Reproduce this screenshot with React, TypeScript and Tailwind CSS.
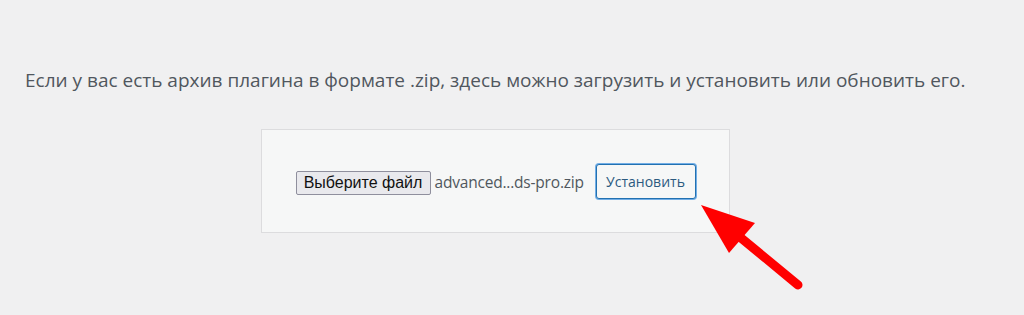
export default function App() {
  return (
    <div className="relative h-[315px] w-[1024px] overflow-hidden bg-[#f0f0f1] font-['Open_Sans',sans-serif]">
      <p className="pl-[25px] pt-[66px] text-[19px] leading-[28px] text-[#50575e]">
        Если у вас есть архив плагина в формате .zip, здесь можно загрузить и установить или обновить его.
      </p>
      <div className="ml-[261px] mt-[35px] flex h-[104px] w-[469px] items-center justify-center border border-[#dcdcde] bg-[#f6f7f7]">
        <div className="flex items-center">
          <button className="mt-[3px] h-[24px] w-[135px] rounded-[2px] border border-[#8f8f9d] bg-[#e9e9ed] font-['Liberation_Sans',sans-serif] text-[16px] leading-[20px] text-[#111]">
            Выберите файл
          </button>
          <span className="ml-[4px] mt-[3px] w-[148px] whitespace-nowrap text-[15.5px] tracking-[-0.2px] text-[#50575e]">
            advanced...ds-pro.zip
          </span>
          <button className="ml-[13px] h-[35px] w-[100px] rounded-[3px] border border-[#2271b1] bg-[#f6f7f7] text-[14px] text-[#2c5a80] shadow-[0_0_0_1px_#72aee6]">
            Установить
          </button>
        </div>
      </div>
      <svg className="pointer-events-none absolute left-0 top-0" width="1024" height="315">
        <line x1="735" y1="233" x2="798" y2="285" stroke="#ff0000" strokeWidth="9" strokeLinecap="round" />
        <polygon points="701,205 755,223 729,253" fill="#ff0000" />
      </svg>
    </div>
  );
}
